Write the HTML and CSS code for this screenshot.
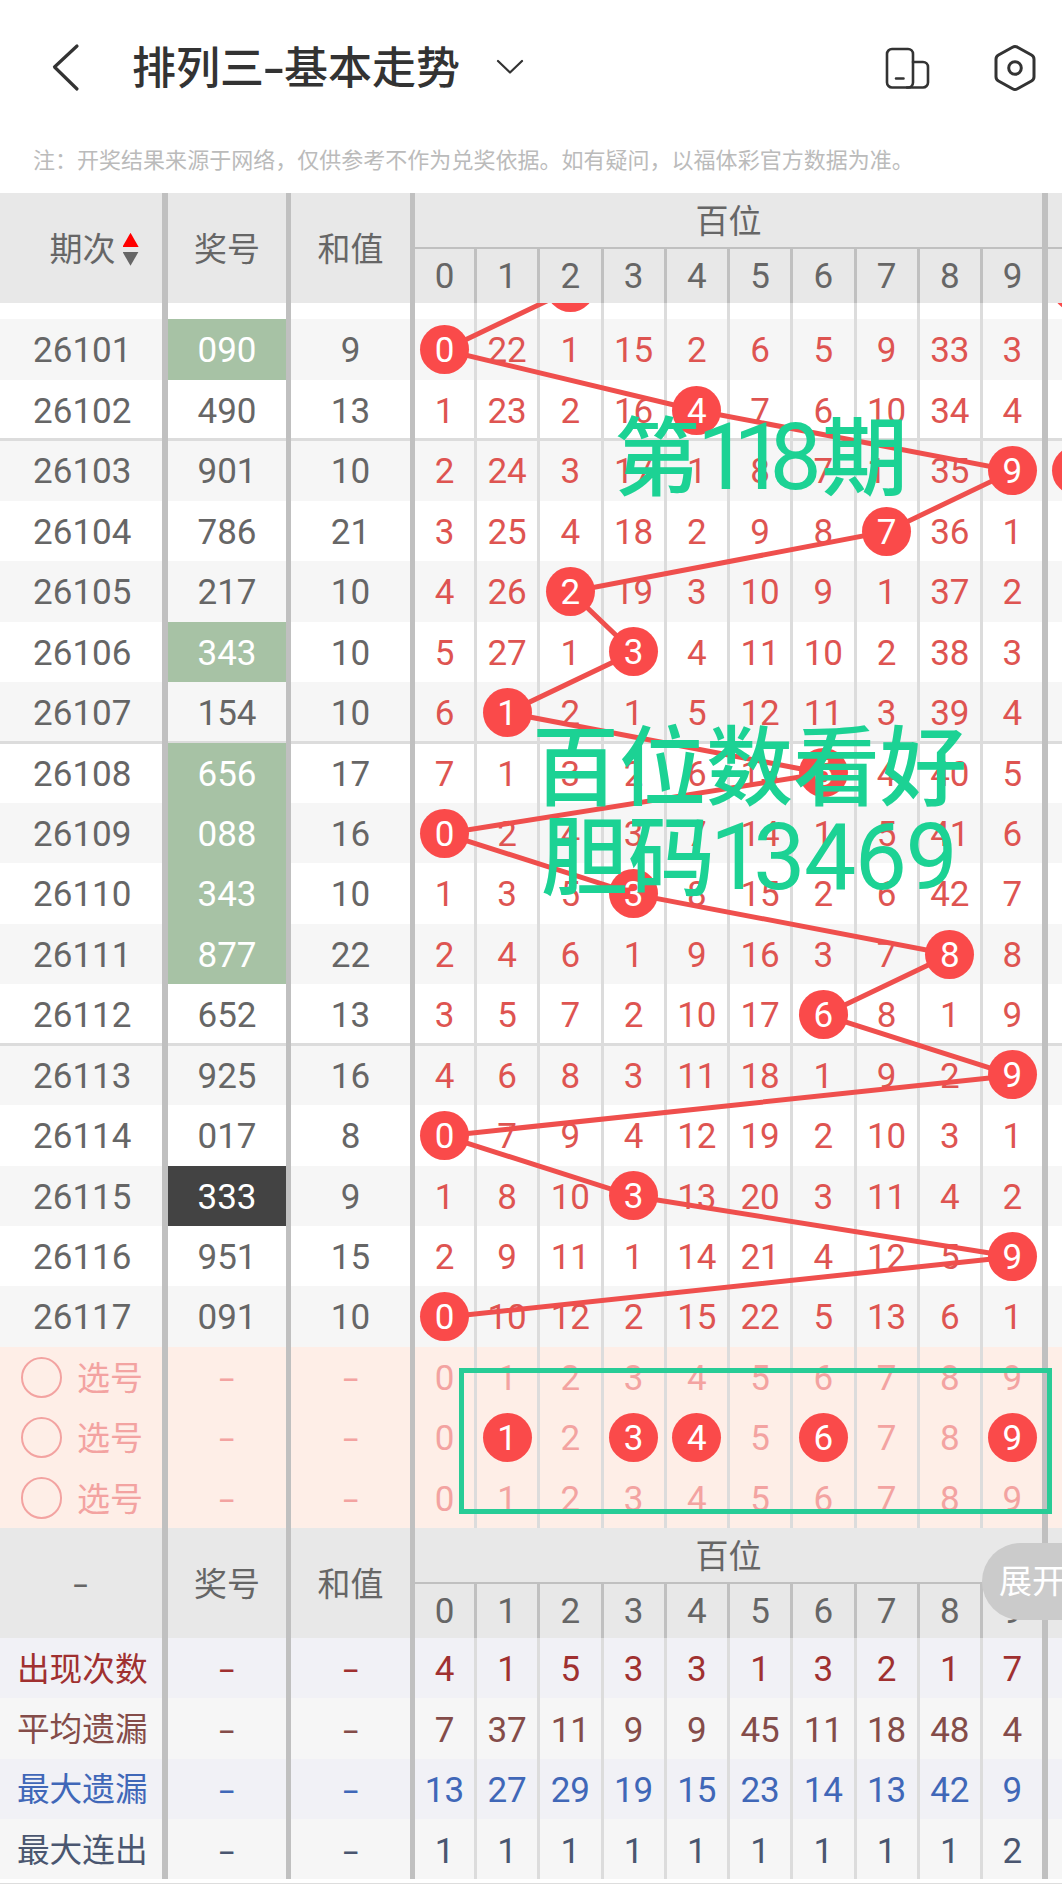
FILE: index.html
```html
<!DOCTYPE html>
<html lang="zh-CN">
<head>
<meta charset="utf-8">
<title>排列三-基本走势</title>
<link rel="stylesheet" href="styles.css">
</head>
<body>
<header class="nav">
  <svg class="nav-back" width="30" height="50" viewBox="0 0 30 50"><path d="M26 4 3.5 25 26 47"/></svg>
  <h1 class="nav-title">排列三<span class="hyphen">-</span>基本走势</h1>
  <svg class="nav-down" width="28" height="16" viewBox="0 0 28 16"><path d="M2 2 14 13.5 26 2"/></svg>
  <svg class="nav-device" width="46" height="44" viewBox="0 0 46 44"><rect x="2" y="2" width="26" height="38.500" rx="5"/><path d="M28 15h10a5 5 0 0 1 5 5v15.500a5 5 0 0 1-5 5H22M11 31.500h7.500"/></svg>
  <svg class="nav-settings" width="44" height="48" viewBox="0 0 44 48"><path d="M19.500 3.200a5 5 0 0 1 5 0l14 7.800a5 5 0 0 1 2.500 4.400v17.200a5 5 0 0 1-2.500 4.400l-14 7.800a5 5 0 0 1-5 0l-14-7.800A5 5 0 0 1 3 32.600V15.400A5 5 0 0 1 5.500 11z"/><circle cx="22" cy="24" r="6.300"/></svg>
</header>
<p class="note">注：开奖结果来源于网络，仅供参考不作为兑奖依据。如有疑问，以福体彩官方数据为准。</p>
<main class="chart">
  <section class="head">
    <div class="side sortable">期次<i class="sort"></i></div><div class="side">奖号</div><div class="side">和值</div>
    <div class="group"><div class="group-name">百位</div><div class="digits"><span>0</span><span>1</span><span>2</span><span>3</span><span>4</span><span>5</span><span>6</span><span>7</span><span>8</span><span>9</span></div></div>
    <div class="next-group"></div>
  </section>
  <section class="body">
    <div class="row partial"><span></span><span></span><span></span><span></span><span></span><span><b></b></span><span></span><span></span><span></span><span></span><span></span><span></span><span></span><span><b></b></span></div>
    <div class="row odd"><span>26101</span><span class="pair">090</span><span>9</span><span><b>0</b></span><span>22</span><span>1</span><span>15</span><span>2</span><span>6</span><span>5</span><span>9</span><span>33</span><span>3</span><span></span></div>
    <div class="row group-end"><span>26102</span><span>490</span><span>13</span><span>1</span><span>23</span><span>2</span><span>16</span><span><b>4</b></span><span>7</span><span>6</span><span>10</span><span>34</span><span>4</span><span></span></div>
    <div class="row odd group-start"><span>26103</span><span>901</span><span>10</span><span>2</span><span>24</span><span>3</span><span>17</span><span>1</span><span>8</span><span>7</span><span>11</span><span>35</span><span><b>9</b></span><span><b></b></span></div>
    <div class="row"><span>26104</span><span>786</span><span>21</span><span>3</span><span>25</span><span>4</span><span>18</span><span>2</span><span>9</span><span>8</span><span><b>7</b></span><span>36</span><span>1</span><span></span></div>
    <div class="row odd"><span>26105</span><span>217</span><span>10</span><span>4</span><span>26</span><span><b>2</b></span><span>19</span><span>3</span><span>10</span><span>9</span><span>1</span><span>37</span><span>2</span><span></span></div>
    <div class="row"><span>26106</span><span class="pair">343</span><span>10</span><span>5</span><span>27</span><span>1</span><span><b>3</b></span><span>4</span><span>11</span><span>10</span><span>2</span><span>38</span><span>3</span><span></span></div>
    <div class="row odd group-end"><span>26107</span><span>154</span><span>10</span><span>6</span><span><b>1</b></span><span>2</span><span>1</span><span>5</span><span>12</span><span>11</span><span>3</span><span>39</span><span>4</span><span></span></div>
    <div class="row group-start"><span>26108</span><span class="pair">656</span><span>17</span><span>7</span><span>1</span><span>3</span><span>2</span><span>6</span><span>13</span><span><b>6</b></span><span>4</span><span>40</span><span>5</span><span></span></div>
    <div class="row odd"><span>26109</span><span class="pair">088</span><span>16</span><span><b>0</b></span><span>2</span><span>4</span><span>3</span><span>7</span><span>14</span><span>1</span><span>5</span><span>41</span><span>6</span><span></span></div>
    <div class="row"><span>26110</span><span class="pair">343</span><span>10</span><span>1</span><span>3</span><span>5</span><span><b>3</b></span><span>8</span><span>15</span><span>2</span><span>6</span><span>42</span><span>7</span><span></span></div>
    <div class="row odd"><span>26111</span><span class="pair">877</span><span>22</span><span>2</span><span>4</span><span>6</span><span>1</span><span>9</span><span>16</span><span>3</span><span>7</span><span><b>8</b></span><span>8</span><span></span></div>
    <div class="row group-end"><span>26112</span><span>652</span><span>13</span><span>3</span><span>5</span><span>7</span><span>2</span><span>10</span><span>17</span><span><b>6</b></span><span>8</span><span>1</span><span>9</span><span></span></div>
    <div class="row odd group-start"><span>26113</span><span>925</span><span>16</span><span>4</span><span>6</span><span>8</span><span>3</span><span>11</span><span>18</span><span>1</span><span>9</span><span>2</span><span><b>9</b></span><span></span></div>
    <div class="row"><span>26114</span><span>017</span><span>8</span><span><b>0</b></span><span>7</span><span>9</span><span>4</span><span>12</span><span>19</span><span>2</span><span>10</span><span>3</span><span>1</span><span></span></div>
    <div class="row odd"><span>26115</span><span class="triple">333</span><span>9</span><span>1</span><span>8</span><span>10</span><span><b>3</b></span><span>13</span><span>20</span><span>3</span><span>11</span><span>4</span><span>2</span><span></span></div>
    <div class="row"><span>26116</span><span>951</span><span>15</span><span>2</span><span>9</span><span>11</span><span>1</span><span>14</span><span>21</span><span>4</span><span>12</span><span>5</span><span><b>9</b></span><span></span></div>
    <div class="row odd"><span>26117</span><span>091</span><span>10</span><span><b>0</b></span><span>10</span><span>12</span><span>2</span><span>15</span><span>22</span><span>5</span><span>13</span><span>6</span><span>1</span><span></span></div>
    <div class="row pick"><span><i class="radio"></i>选号</span><span><i class="dash">-</i></span><span><i class="dash">-</i></span><span>0</span><span>1</span><span>2</span><span>3</span><span>4</span><span>5</span><span>6</span><span>7</span><span>8</span><span>9</span><span></span></div>
    <div class="row pick"><span><i class="radio"></i>选号</span><span><i class="dash">-</i></span><span><i class="dash">-</i></span><span>0</span><span><b>1</b></span><span>2</span><span><b>3</b></span><span><b>4</b></span><span>5</span><span><b>6</b></span><span>7</span><span>8</span><span><b>9</b></span><span></span></div>
    <div class="row pick"><span><i class="radio"></i>选号</span><span><i class="dash">-</i></span><span><i class="dash">-</i></span><span>0</span><span>1</span><span>2</span><span>3</span><span>4</span><span>5</span><span>6</span><span>7</span><span>8</span><span>9</span><span></span></div>
    <svg class="trend" width="1062" height="1045" viewBox="0 0 1062 1045"><polyline points="570.6,-13.400 444.200,47 697,107.500 1013.200,167.900 887,228.400 570.600,288.800 633.800,349.300 507.300,409.700 823.700,470.200 444.200,530.600 633.800,591.100 950.200,651.500 823.700,712 1013.200,772.400 444.200,832.900 633.800,893.300 1013.200,953.800 444.200,1014.200"/></svg>
  </section>
  <section class="head">
    <div class="side"><i class="dash">-</i></div><div class="side">奖号</div><div class="side">和值</div>
    <div class="group"><div class="group-name">百位</div><div class="digits"><span>0</span><span>1</span><span>2</span><span>3</span><span>4</span><span>5</span><span>6</span><span>7</span><span>8</span><span>9</span></div></div>
    <div class="next-group"></div>
  </section>
  <section class="stats">
    <div class="row count"><span>出现次数</span><span><i class="dash">-</i></span><span><i class="dash">-</i></span><span>4</span><span>1</span><span>5</span><span>3</span><span>3</span><span>1</span><span>3</span><span>2</span><span>1</span><span>7</span><span></span></div>
    <div class="row average"><span>平均遗漏</span><span><i class="dash">-</i></span><span><i class="dash">-</i></span><span>7</span><span>37</span><span>11</span><span>9</span><span>9</span><span>45</span><span>11</span><span>18</span><span>48</span><span>4</span><span></span></div>
    <div class="row longest"><span>最大遗漏</span><span><i class="dash">-</i></span><span><i class="dash">-</i></span><span>13</span><span>27</span><span>29</span><span>19</span><span>15</span><span>23</span><span>14</span><span>13</span><span>42</span><span>9</span><span></span></div>
    <div class="row streak"><span>最大连出</span><span><i class="dash">-</i></span><span><i class="dash">-</i></span><span>1</span><span>1</span><span>1</span><span>1</span><span>1</span><span>1</span><span>1</span><span>1</span><span>1</span><span>2</span><span></span></div>
  </section>
</main>
<div class="mark mark-issue">第<span class="ones">11</span><span class="num">8</span>期</div>
<div class="mark mark-place">百位数看好</div>
<div class="mark mark-codes">胆码<span class="num"><span class="lead">1</span>3469</span></div>
<div class="mark-box"></div>
<div class="expand">展开</div>
</body>
</html>
```
FILE: styles.css
```css
* { box-sizing: border-box; }

body {
  position: relative;
  margin: 0;
  width: 1062px;
  height: 1895px;
  overflow: hidden;
  background: #fff;
  color: #666;
  font: 33px/1 Roboto, "Noto Sans CJK SC", sans-serif;
}

/* top bar */
.nav { display: flex; align-items: center; height: 134px; padding-left: 51px; }
.nav svg { flex: none; fill: none; stroke: #333; stroke-width: 2.6; stroke-linecap: round; stroke-linejoin: round; }
.nav .nav-back { stroke-width: 3.2; }
.nav-title { width: 325px; margin: 0 0 0 51px; padding-top: 3px; font-size: 44px; font-weight: 500; line-height: 60px; color: #333; white-space: nowrap; }
.hyphen { display: inline-block; width: 20px; transform: scaleX(1.5); text-align: center; }
.nav .nav-down { margin-left: 39px; stroke-width: 2.2; }
.nav-device { margin: 3px 0 0 361px; }
.nav .nav-settings { margin: 1px 0 0 62px; stroke-width: 3; }
.note { height: 59px; margin: 0; padding-left: 33px; font-size: 22px; line-height: 53px; letter-spacing: 0.02px; color: #bbb; white-space: nowrap; }

/* column headings */
.head { display: grid; grid-template-columns: 168px 123px 124px 633px 14px; height: 109.7px; background: #e8e8e8; }
.side { display: flex; align-items: center; justify-content: center; padding-top: 3px; border-right: 5px solid #c0c0c0; }
.side:first-child { border-right-width: 6px; }
.sortable { padding-left: 24px; }
.sort { width: 16px; height: 33px; margin: 0 -2px 0 7px; background: linear-gradient(#f00, #f00) top / 16px 14px no-repeat, linear-gradient(#666, #666) bottom / 16px 14px no-repeat; clip-path: polygon(50% 0, 100% 14px, 100% 19px, 50% 100%, 0 19px, 0 14px); }
.group { border-right: 6px solid #c0c0c0; }
.group-name { height: 56px; border-bottom: 2px solid #c0c0c0; line-height: 57px; text-align: center; }
.digits { display: grid; grid-template-columns: 62px repeat(8, 63.26px) auto; height: 53.7px; font-size: 35px; line-height: 56px; text-align: center; }
.digits span { border-right: 3px solid #c0c0c0; }
.digits span:last-child { border-right: 0; }
.next-group { height: 56px; border-bottom: 2px solid #c0c0c0; }

/* rows */
.body { position: relative; overflow: hidden; }
.row { display: grid; grid-template-columns: 168px 123px 124px 62px repeat(8, 63.26px) 64.92px 14px; height: 60.45px; font-size: 35px; }
.row > span { display: flex; align-items: center; justify-content: center; padding-top: 2.5px; border-right: 3px solid #dcdcdc; color: #de5451; }
.row > span:nth-child(-n+3) { border-right: 5px solid #c0c0c0; color: #666; }
.row > span:first-child { padding-left: 2.5px; border-right-width: 6px; }
.row > span:nth-child(13) { border-right: 6px solid #c0c0c0; }
.row > span:last-child { justify-content: flex-start; padding-left: 4px; border: 0; }
.odd { background-color: #f6f6f6; }
.group-end { background-image: linear-gradient(to top, #dcdcdc 2px, transparent 2px); }
.group-start { background-image: linear-gradient(#dcdcdc 1px, transparent 1px); }
.partial { height: 16.8px; }
.row.partial > span { padding-top: 0; }
.partial b { transform: translateY(-37px); }
.row > span.pair { background: #a7c2a5; color: #fff; }
.row > span.triple { background: #434343; color: #fff; }
.row b { position: relative; z-index: 2; flex: none; width: 49px; height: 49px; margin-top: -2.5px; border-radius: 50%; background: #fa4a4a; color: #fff; font-weight: 400; line-height: 51px; text-align: center; }
.trend { position: absolute; z-index: 1; top: 0; left: 0; fill: none; stroke: #ef4f4d; stroke-width: 5; }
.dash { font-style: normal; transform: scaleX(1.6); }

/* number picking */
.row.pick { height: 60.35px; background: #feeee7; }
.row.pick > span { color: #f3a3a1; }
.row.pick > span:first-child { justify-content: flex-start; padding-left: 20.5px; font-size: 33px; }
.radio { width: 41.5px; height: 41.5px; margin: -2px 15px 0 0; border: 2.5px solid #f3a3a1; border-radius: 50%; }

/* statistics */
.stats { height: 246px; border-bottom: 1.5px solid #ddd; }
.stats .row > span { padding-top: 4px; }
.stats .row > span:first-child { font-size: 32.7px; }
.count, .longest { background: #f1f1f6; }
.average, .streak { background: #f6f6f6; }
.row.count > span:nth-child(n) { color: #a03030; }
.row.average > span:nth-child(n) { color: #844c49; }
.row.longest > span:nth-child(n) { color: #4067b8; }
.row.streak > span:nth-child(n) { color: #4a5670; }

/* annotations over the chart */
.mark { position: absolute; z-index: 3; color: #1cd294; font-size: 87px; font-weight: 500; line-height: 100px; white-space: nowrap; }
.mark-issue { left: 614px; top: 408px; font-size: 86px; }
.mark-place { left: 532px; top: 719px; }
.mark-codes { left: 541px; top: 808px; }
.num, .ones { font-size: 93px; font-weight: 400; }
.ones { margin-left: -3px; letter-spacing: -16px; }
.mark-codes .num { margin-left: -5px; letter-spacing: -1.5px; }
.lead { letter-spacing: -9px; }
.mark-box { position: absolute; z-index: 3; left: 459px; top: 1368px; width: 593px; height: 146px; border: 5px solid #28cc96; }
.expand { position: absolute; z-index: 3; left: 982px; top: 1543px; width: 100px; height: 77px; padding-left: 17px; border-radius: 38.5px 0 0 38.5px; background: #cbcbcb; color: #fff; line-height: 77px; white-space: nowrap; }
```
